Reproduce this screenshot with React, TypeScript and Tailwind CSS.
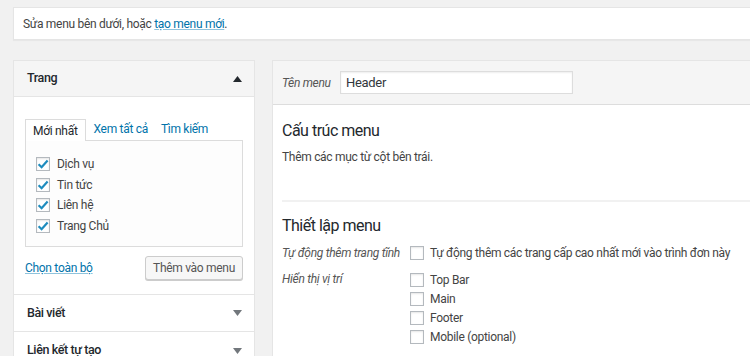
import React from "react";

const Check = ({ checked }: { checked?: boolean }) => (
  <span className="relative inline-block w-[14px] h-[14px] border border-[#b4b9be] bg-white shadow-[inset_0_1px_2px_rgba(0,0,0,0.1)] shrink-0">
    {checked && (
      <svg viewBox="0 0 14 14" className="absolute left-[-1px] top-[-1px] w-[14px] h-[14px]">
        <path d="M2.6 7.2 L5.6 10.2 L11.6 3.4" fill="none" stroke="#1e8cbe" strokeWidth="2.2" />
      </svg>
    )}
  </span>
);

const Up = () => (
  <svg width="9" height="6" viewBox="0 0 9 6"><path d="M0 6 L4.5 0 L9 6 Z" fill="#23282d" /></svg>
);
const Down = () => (
  <svg width="9" height="6" viewBox="0 0 9 6"><path d="M0 0 L4.5 6 L9 0 Z" fill="#72777c" /></svg>
);

export default function App() {
  return (
    <div
      className="w-[750px] h-[356px] overflow-hidden bg-[#f1f1f1] text-[#444] text-[12px] tracking-[-0.3px]"
      style={{ fontFamily: 'Roboto, "Open Sans", sans-serif' }}
    >
      <div className="pt-[7px] pl-[13px]">
        <div className="h-[33px] w-[760px] bg-white border border-[#e5e5e5] shadow-[0_1px_1px_rgba(0,0,0,0.04)] flex items-center pl-[9px]">
          <span>
            Sửa menu bên dưới, hoặc{" "}
            <span className="text-[#0073aa] underline decoration-[#8fc3dc]">tạo menu mới</span>.
          </span>
        </div>
      </div>

      <div className="flex pl-[13px] pt-[20px] gap-[17px]">
        {/* Left column */}
        <div className="w-[242px] shrink-0 bg-white border border-[#e5e5e5] h-[320px]">
          <div className="h-[36px] bg-[#f5f5f5] border-b border-[#e5e5e5] flex items-center justify-between pl-[13px] pr-[12px]">
            <span className="text-[12.5px] text-[#23282d] font-medium tracking-[-0.4px]">Trang</span>
            <Up />
          </div>
          <div className="px-[11px] pt-[21px] pb-[14px] border-b border-[#e5e5e5]">
            <div className="flex items-end h-[22px]">
              <div className="h-[22px] px-[7px] bg-white border border-b-0 border-[#dcdcdc] text-[#23282d] flex items-center relative top-[1px]">
                Mới nhất
              </div>
              <span className="text-[#0073aa] ml-[8px] h-[22px] flex items-center">Xem tất cả</span>
              <span className="text-[#0073aa] ml-[13px] h-[22px] flex items-center">Tìm kiếm</span>
            </div>
            <div className="h-[107px] border border-[#dcdcdc] bg-[#fdfdfd] pl-[10px] pt-[13px]">
              {["Dịch vụ", "Tin tức", "Liên hệ", "Trang Chủ"].map((t) => (
                <div key={t} className="h-[20.5px] flex items-center gap-[7px] text-[#444]">
                  <Check checked />
                  <span>{t}</span>
                </div>
              ))}
            </div>
            <div className="flex items-center justify-between mt-[9px]">
              <span className="text-[#0073aa] underline decoration-[#8fc3dc]">Chọn toàn bộ</span>
              <div className="h-[24px] w-[98px] bg-[#f7f7f7] border border-[#cccccc] rounded-[3px] shadow-[0_1px_0_#ccc] flex items-center justify-center text-[#555]">
                Thêm vào menu
              </div>
            </div>
          </div>
          <div className="h-[37px] border-b border-[#e5e5e5] flex items-center justify-between pl-[13px] pr-[12px]">
            <span className="text-[12.5px] text-[#23282d] font-medium tracking-[-0.4px]">Bài viết</span>
            <Down />
          </div>
          <div className="h-[37px] flex items-center justify-between pl-[13px] pr-[12px]">
            <span className="text-[12.5px] text-[#23282d] font-medium tracking-[-0.4px]">Liên kết tự tạo</span>
            <Down />
          </div>
        </div>

        {/* Right column */}
        <div className="w-[500px] shrink-0 bg-white border border-[#e5e5e5] h-[320px]">
          <div className="h-[44px] bg-[#f5f5f5] border-b border-[#dddddd] flex items-center pl-[9px]">
            <span className="italic text-[#555] w-[58px]">Tên menu</span>
            <div className="w-[233px] h-[23px] bg-white border border-[#dddddd] shadow-[inset_0_1px_2px_rgba(0,0,0,0.07)] flex items-center pl-[5px] text-[13px] text-[#32373c]">
              Header
            </div>
          </div>
          <div className="pl-[9px]">
            <div className="pt-[15px] text-[16px] text-[#23282d] leading-[22px] tracking-[-0.5px]">Cấu trúc menu</div>
            <div className="mt-[6px] leading-[18px]">Thêm các mục từ cột bên trái.</div>
            <div className="mt-[34px] h-[2px] bg-[#f1f1f1]" />
            <div className="pt-[13px] text-[16px] text-[#23282d] leading-[22px] tracking-[-0.5px]">Thiết lập menu</div>
            <div className="flex mt-[7px] items-center">
              <span className="italic text-[#555] w-[128px] leading-[18px]">Tự động thêm trang tĩnh</span>
              <div className="flex items-center gap-[6px]">
                <Check />
                <span>Tự động thêm các trang cấp cao nhất mới vào trình đơn này</span>
              </div>
            </div>
            <div className="flex mt-[8px]">
              <span className="italic text-[#555] w-[128px] leading-[18px]">Hiển thị vị trí</span>
              <div className="flex flex-col">
                {["Top Bar", "Main", "Footer", "Mobile (optional)"].map((t) => (
                  <div key={t} className="h-[19px] flex items-center gap-[6px]">
                    <Check />
                    <span>{t}</span>
                  </div>
                ))}
              </div>
            </div>
          </div>
        </div>
      </div>
    </div>
  );
}
